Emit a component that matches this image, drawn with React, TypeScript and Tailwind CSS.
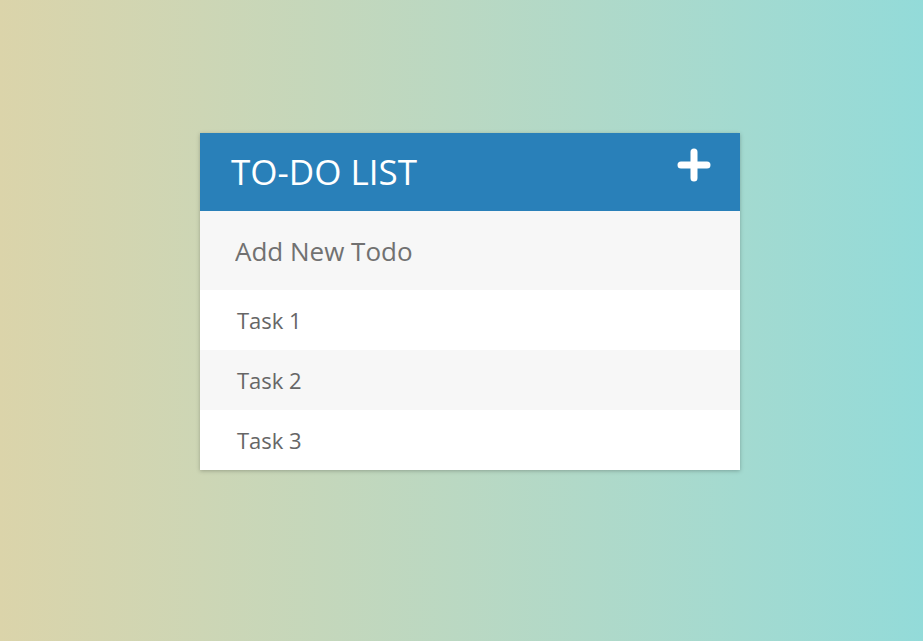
import { useState } from 'react';

const tasks = ['Task 1', 'Task 2', 'Task 3'];

function PlusIcon() {
  return (
    <svg width="34" height="34" viewBox="0 0 34 34" className="block">
      <path d="M17 4v26M4 17h26" stroke="#fff" strokeWidth="7" strokeLinecap="round" />
    </svg>
  );
}

export default function App() {
  const [value, setValue] = useState('');
  return (
    <div className="flex min-h-[641px] w-full items-start justify-center bg-gradient-to-r from-[#dbd4aa] to-[#93dbd9] pl-[17px] pt-[133px] font-['Open_Sans',sans-serif]">
      <div className="w-[540px] bg-white shadow-[0_1px_4px_rgba(0,0,0,0.25)]">
        <div className="flex h-[78px] items-center justify-between bg-[#2980b9] pl-[31px] pr-[29px]">
          <h1 className="text-[35px] font-normal text-white">TO-DO LIST</h1>
          <button className="-mt-[15px]">
            <PlusIcon />
          </button>
        </div>
        <input
          value={value}
          onChange={(e) => setValue(e.target.value)}
          placeholder="Add New Todo"
          className="block h-[79px] w-full bg-[#f7f7f7] px-[35px] text-[26px] text-[#666] outline-none placeholder:text-[#717171]"
        />
        <ul>
          {tasks.map((t, i) => (
            <li
              key={t}
              className={`flex h-[60px] items-center px-[37px] text-[22px] text-[#666] ${i % 2 === 1 ? 'bg-[#f7f7f7]' : 'bg-white'}`}
            >
              {t}
            </li>
          ))}
        </ul>
      </div>
    </div>
  );
}
